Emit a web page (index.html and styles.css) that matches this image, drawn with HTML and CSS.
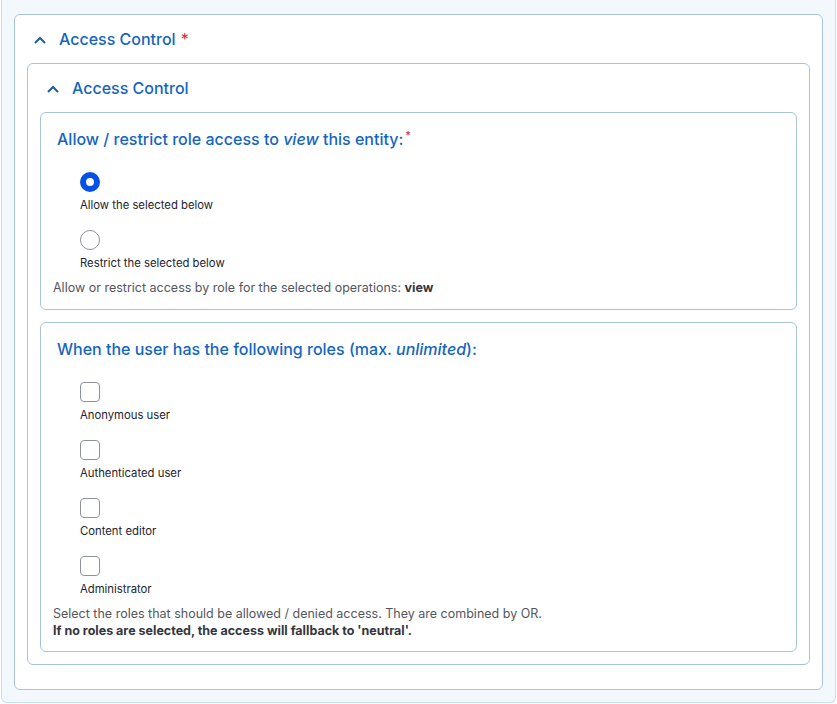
FILE: index.html
```html
<!DOCTYPE html>
<html lang="en">
<head>
<meta charset="utf-8">
<title>Access Control</title>
<link rel="stylesheet" href="styles.css">
</head>
<body>
<div class="outer">
  <details class="panel panel-top" open>
    <summary class="summary">
      <svg class="chev" width="12" height="8" viewBox="0 0 12 8"><path d="M1 7 L6 2 L11 7" fill="none" stroke="#1d5e9e" stroke-width="2"/></svg>
      <span class="summary-text">Access Control</span><span class="req">*</span>
    </summary>
    <details class="panel panel-inner" open>
      <summary class="summary">
        <svg class="chev" width="12" height="8" viewBox="0 0 12 8"><path d="M1 7 L6 2 L11 7" fill="none" stroke="#1d5e9e" stroke-width="2"/></svg>
        <span class="summary-text">Access Control</span>
      </summary>
      <div class="panel-body">
        <fieldset class="fs fs-mode">
          <div class="legend">Allow / restrict role access to <em>view</em> this entity:<sup class="req-sup">*</sup></div>
          <div class="options">
            <label class="opt">
              <span class="radio checked"></span>
              <span class="opt-label">Allow the selected below</span>
            </label>
            <label class="opt">
              <span class="radio"></span>
              <span class="opt-label">Restrict the selected below</span>
            </label>
          </div>
          <div class="desc">Allow or restrict access by role for the selected operations: <strong>view</strong></div>
        </fieldset>
        <fieldset class="fs fs-roles">
          <div class="legend">When the user has the following roles (max. <em>unlimited</em>):</div>
          <div class="options">
            <label class="opt">
              <span class="checkbox"></span>
              <span class="opt-label">Anonymous user</span>
            </label>
            <label class="opt">
              <span class="checkbox"></span>
              <span class="opt-label">Authenticated user</span>
            </label>
            <label class="opt">
              <span class="checkbox"></span>
              <span class="opt-label">Content editor</span>
            </label>
            <label class="opt">
              <span class="checkbox"></span>
              <span class="opt-label">Administrator</span>
            </label>
          </div>
          <div class="desc">Select the roles that should be allowed / denied access. They are combined by OR.<br><strong>If no roles are selected, the access will fallback to 'neutral'.</strong></div>
        </fieldset>
      </div>
    </details>
  </details>
</div>
</body>
</html>
```

FILE: styles.css
```css
* { box-sizing: border-box; }
html, body { margin: 0; padding: 0; background: #ffffff; }
body {
  font-family: Inter, "Noto Sans", "Liberation Sans", sans-serif;
  color: #222330;
  width: 837px;
  height: 704px;
  overflow: hidden;
}
.outer {
  margin: 0 1px 0 1px;
  width: 835px;
  background: #f3f8fd;
  border: 1px solid #c9def1;
  border-top: none;
  border-radius: 0 0 6px 6px;
  padding: 14px 12px 12px 12px;
}
.panel {
  background: #ffffff;
  border: 1px solid #a9c4da;
  border-radius: 6px;
}
.panel-top { padding: 0 12px 24px 12px; }
.panel-top > .summary { margin: 0 -12px; }
.panel-inner { padding: 0 12px 12px 12px; }
.panel-inner > .summary { margin: 0 -12px; }
.summary {
  list-style: none;
  height: 48px;
  display: flex;
  align-items: center;
  padding-left: 19px;
  cursor: pointer;
}
.summary::-webkit-details-marker { display: none; }
.chev { flex: none; margin-top: 2px; }
.summary-text {
  margin-left: 13px;
  font-size: 16px;
  font-weight: 500;
  color: #1565c0;
}
.req {
  color: #d32f2f;
  margin-left: 5px;
  font-size: 16px;
}
.panel-body { display: flex; flex-direction: column; gap: 12px; }
.fs {
  margin: 0;
  border: 1px solid #a9c4da;
  border-radius: 6px;
  padding: 16px 12px 13px 12px;
  min-width: 0;
}
.fs-roles { padding-bottom: 12px; }
.legend {
  padding-left: 4px;
  font-size: 16px;
  font-weight: 500;
  color: #1565c0;
  line-height: 20px;
}
.legend em { font-weight: 500; }
.req-sup {
  color: #d32f2f;
  font-size: 11px;
  vertical-align: top;
  position: relative;
  top: -4px;
  margin-left: 2px;
}
.options {
  margin-top: 23px;
  padding-left: 27px;
  display: flex;
  flex-direction: column;
}
.opt {
  display: flex;
  flex-direction: column;
  align-items: flex-start;
  margin-bottom: 17px;
}
.opt:last-child { margin-bottom: 8px; }
.radio {
  width: 20px;
  height: 20px;
  border-radius: 50%;
  border: 1px solid #8e929c;
  background: #fff;
}
.radio.checked {
  border: 6px solid #0550e6;
}
.checkbox {
  width: 20px;
  height: 20px;
  border-radius: 4px;
  border: 1px solid #8e929c;
  background: #fff;
}
.opt-label {
  margin-top: 5px;
  font-size: 11.3px;
  line-height: 16px;
  color: #222330;
}
.desc {
  font-size: 12.5px;
  line-height: 17px;
  color: #55565e;
}
.desc strong { color: #35363f; font-weight: 700; }
```
